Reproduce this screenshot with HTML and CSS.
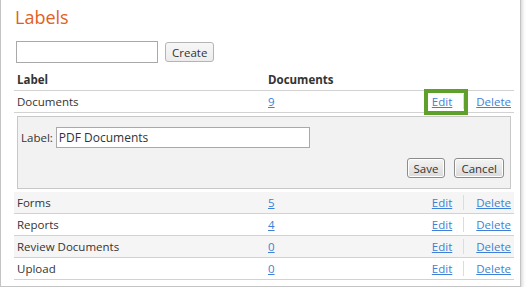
FILE: index.html
```html
<!DOCTYPE html>
<html lang="en">
<head>
    <meta charset="UTF-8">
    <meta name="viewport" content="width=device-width, initial-scale=1.0">
    <title>Labels</title>
    <link rel="stylesheet" href="styles.css">
</head>
<body>
    <div class="panel">
        <h1 class="title">Labels</h1>

        <form class="create-form">
            <input type="text" class="text-input create-input">
            <button type="button" class="btn btn-create">Create</button>
        </form>

        <div class="label-list">
            <div class="row row-head">
                <div class="cell">Label</div>
                <div class="cell">Documents</div>
                <div class="cell"></div>
            </div>

            <div class="row">
                <div class="cell">Documents</div>
                <div class="cell"><a href="#">9</a></div>
                <div class="cell actions">
                    <a href="#" class="edit-link highlighted">Edit</a>
                    <span class="sep"></span>
                    <a href="#" class="delete-link">Delete</a>
                </div>
            </div>

            <div class="edit-row">
                <div class="edit-panel">
                    <div class="edit-field">
                        <label for="label-name">Label:</label>
                        <input type="text" id="label-name" class="text-input edit-input" value="PDF Documents">
                    </div>
                    <div class="edit-buttons">
                        <button type="button" class="btn btn-dark">Save</button>
                        <button type="button" class="btn btn-dark">Cancel</button>
                    </div>
                </div>
            </div>

            <div class="row row-alt">
                <div class="cell">Forms</div>
                <div class="cell"><a href="#">5</a></div>
                <div class="cell actions">
                    <a href="#" class="edit-link">Edit</a>
                    <span class="sep"></span>
                    <a href="#" class="delete-link">Delete</a>
                </div>
            </div>

            <div class="row">
                <div class="cell">Reports</div>
                <div class="cell"><a href="#">4</a></div>
                <div class="cell actions">
                    <a href="#" class="edit-link">Edit</a>
                    <span class="sep"></span>
                    <a href="#" class="delete-link">Delete</a>
                </div>
            </div>

            <div class="row row-alt">
                <div class="cell">Review Documents</div>
                <div class="cell"><a href="#">0</a></div>
                <div class="cell actions">
                    <a href="#" class="edit-link">Edit</a>
                    <span class="sep"></span>
                    <a href="#" class="delete-link">Delete</a>
                </div>
            </div>

            <div class="row">
                <div class="cell">Upload</div>
                <div class="cell"><a href="#">0</a></div>
                <div class="cell actions">
                    <a href="#" class="edit-link">Edit</a>
                    <span class="sep"></span>
                    <a href="#" class="delete-link">Delete</a>
                </div>
            </div>
        </div>
    </div>
</body>
</html>
```

FILE: styles.css
```css
body {
    font-family: 'Open Sans', 'Liberation Sans', sans-serif;
    font-size: 11.5px;
    color: #333;
    background-color: #fff;
    margin: 0;
    padding: 0;
}

.panel {
    width: 500px;
    margin-top: -10px;
    padding: 14px 6px 6px 13px;
    border: 1px solid #c4c4c4;
    background-color: #fff;
    box-shadow: 1px 2px 4px rgba(0, 0, 0, 0.2);
}

.title {
    margin: 0 0 0 1px;
    font-size: 18px;
    font-weight: normal;
    line-height: 24px;
    color: #e2601c;
}

.create-form {
    display: flex;
    align-items: flex-start;
    gap: 7px;
    margin: 12px 0 6px 2px;
}

.text-input {
    box-sizing: border-box;
    height: 22px;
    padding: 0 2px;
    border: 1px solid #a9a9a9;
    font-family: inherit;
    font-size: 12px;
    color: #333;
    background-color: #fff;
    outline: none;
}

.create-input {
    width: 142px;
}

.btn {
    box-sizing: border-box;
    height: 20px;
    padding: 0 6px;
    font-family: inherit;
    font-size: 11.5px;
    line-height: 17px;
    color: #333;
    border-radius: 3px;
    cursor: pointer;
}

.btn-create {
    width: 49px;
    margin-top: 1px;
    border: 1px solid #b4b4b4;
    background: linear-gradient(#f7f7f7, #ececec);
}

.btn-dark {
    border: 1px solid #8c8c8c;
    background: linear-gradient(#f4f4f4, #dadada);
    box-shadow: inset 0 0 0 1px #fff;
}

.row {
    display: grid;
    grid-template-columns: 251px 1fr auto;
    line-height: 21px;
    border-bottom: 1px solid #d2d2d2;
}

.row-alt {
    background-color: #f5f5f5;
}

.row-head {
    font-weight: bold;
}

.cell {
    padding: 0 3px;
    white-space: nowrap;
}

a {
    color: #3f7fd6;
    text-decoration: underline;
}

.actions {
    display: flex;
    align-items: center;
}

.actions a {
    display: block;
}

.edit-link {
    margin-right: 11px;
}

.delete-link {
    margin-left: 12px;
}

.sep {
    width: 1px;
    height: 15px;
    background-color: #dcdcdc;
}

.highlighted {
    position: relative;
}

.highlighted::after {
    content: '';
    position: absolute;
    left: -8px;
    top: -2px;
    width: 44px;
    height: 26px;
    box-sizing: border-box;
    border: 4px solid #5fa02a;
}

.edit-row {
    padding: 3px;
}

.edit-panel {
    padding: 10px 6px 10px 3px;
    border: 1px solid #c8c8c8;
    background-color: #f2f2f2;
}

.edit-field {
    display: flex;
    align-items: center;
    gap: 3px;
}

.edit-input {
    width: 254px;
    height: 21px;
}

.edit-buttons {
    display: flex;
    justify-content: flex-end;
    gap: 9px;
    margin-top: 10px;
}
```
